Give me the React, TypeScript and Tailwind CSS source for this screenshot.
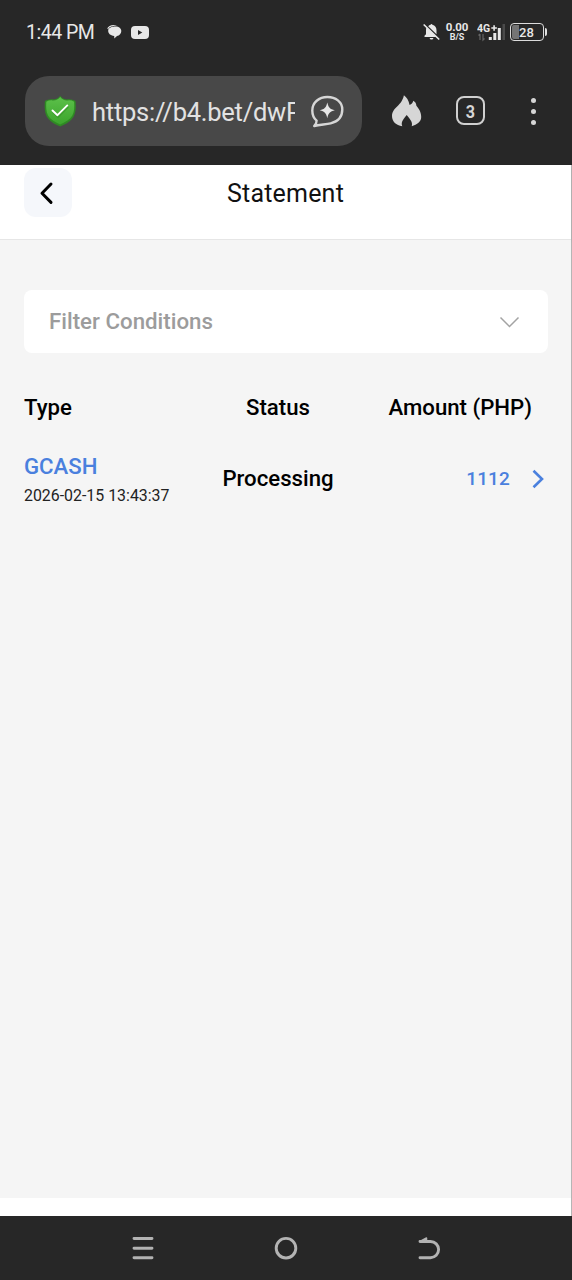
import type { ReactNode } from 'react';

type Transaction = {
  id: number;
  type: string;
  date: string;
  status: string;
  amount: number;
};

const transactions: Transaction[] = [
  { id: 1, type: 'GCASH', date: '2026-02-15 13:43:37', status: 'Processing', amount: 1112 },
];

function StatusBar() {
  return (
    <div className="flex h-16 items-center pl-[26px] pr-[25px] text-[#e8e8e8]">
      <span className="w-[69px] pt-px text-[19.5px] leading-none tracking-[-0.5px] whitespace-nowrap">1:44 PM</span>

      {/* notifications */}
      <svg className="ml-[11px] h-4 w-4" viewBox="0 0 16 16" fill="currentColor">
        <path d="M1.200 4.600C2 2.200 4.800.8 8 .9l3 .6C7.500 1.900 4 2.200 2.200 5z" />
        <path d="M8.500 2.600c3.900-.5 6.800 1.500 6.800 4.400 0 2.600-1.800 4.600-4.300 5.100L8.300 14.500l-.1-2.600C4.300 11.500 2 9.200 2.200 6.400c.2-2.200 2.800-3.600 6.300-3.800z" />
      </svg>
      <svg className="ml-[9px] h-[13px] w-[18px]" viewBox="0 0 18 13">
        <rect width="18" height="13" rx="4" fill="currentColor" />
        <path d="M7 4v5l4.300-2.500z" fill="#272727" />
      </svg>

      <div className="ml-auto flex items-center">
        <svg className="h-[18px] w-[17px]" viewBox="0 0 17 18" fill="currentColor">
          <path d="M3.500 4.200 13.500 14H1.500v-1.200L3 11.200V7.300c0-1.200.1-2.300.5-3.100z" />
          <path d="M5.200 3.300c.6-.7 1.400-1.200 2.400-1.500C7.700.8 9.300.8 9.400 1.800c2.700.6 4.100 2.700 4.100 5.500v4z" />
          <path d="M6.600 15h3.800c-.4 2-3.400 2-3.800 0z" />
          <path d="m1.200 2 14.500 14" stroke="currentColor" strokeWidth="1.700" strokeLinecap="round" />
        </svg>
        <div className="ml-[5px] flex w-[24px] flex-col items-center font-bold">
          <span className="h-[10px] text-[11.5px] leading-[9px] tracking-[-0.2px]">0.00</span>
          <span className="h-[9px] text-[9px] leading-[9px]">B/S</span>
        </div>
        <svg className="ml-[8px] h-[20px] w-[29px]" viewBox="0 0 29 20">
          <text x="0" y="10" fontSize="10.500" fontWeight="700" fill="currentColor" className="font-['Roboto',sans-serif]">4G</text>
          <path d="M14.300 6h5.600M17.100 3.200v5.600" stroke="currentColor" strokeWidth="1.600" />
          <path d="M3 12v6M1.500 13.500 3 12M6 12v6l1.500-1.500" stroke="#666" strokeWidth="1.200" fill="none" />
          <rect x="11.800" y="15" width="3" height="3" fill="currentColor" />
          <rect x="16.300" y="11" width="3" height="7" fill="currentColor" />
          <rect x="20.800" y="6" width="3" height="12" fill="currentColor" />
          <rect x="25.500" y="2" width="2.500" height="16" fill="#4a4a4a" />
        </svg>
        <div className="ml-[4px] flex items-center">
          <div className="flex h-[18px] w-[34px] items-center justify-center rounded-[4px] border-[1.5px] border-[#dcdcdc] bg-[linear-gradient(90deg,#747474_25%,transparent_25%)] bg-origin-content bg-clip-content p-px pr-[2px] text-[13px] leading-none font-medium">
            28
          </div>
          <div className="ml-px h-[8px] w-[2px] rounded-r bg-[#e0e0e0]" />
        </div>
      </div>
    </div>
  );
}

function ShieldIcon() {
  return (
    <svg className="h-8 w-8 shrink-0" viewBox="0 0 32 32">
      <defs>
        <linearGradient id="shield" x1="0" y1="0" x2="0" y2="1">
          <stop offset="0" stopColor="#5cc04a" />
          <stop offset="1" stopColor="#3ba52c" />
        </linearGradient>
      </defs>
      <path
        d="M16.200.800c2 2.700 4.500 3.900 7.800 3.500 2.400-.4 5.400.5 7.500 1.700.4 5.500.7 10.500-1.800 15.400-2.400 4.500-7.500 7.500-13.500 10.100-6-2.600-11-5.500-13.500-10C.200 16.500.5 11.500.9 6 3 4.800 6 3.900 8.400 4.300c3.300.4 5.800-.8 7.800-3.500z"
        fill="#2f8a24"
      />
      <path
        d="M16.200 2c2 2.700 4.700 3.800 8 3.400 2-.2 3.900.3 5.900 1.300.3 5 .3 9.700-1.800 13.900-2.200 3.900-6.600 6.500-12.100 8.900-5.500-2.400-9.900-5-12.100-8.900C2 16.400 2 11.700 2.300 6.700c2-1 3.900-1.500 5.900-1.300 3.300.4 6-.7 8-3.400z"
        fill="url(#shield)"
      />
      <path d="m9 16.500 5 5 10-10" fill="none" stroke="#2f8a24" strokeOpacity=".5" strokeWidth="2.500" />
      <path d="m8.500 15.500 5 4.700 9.800-9.800" fill="none" stroke="#fff" strokeWidth="1.900" strokeLinecap="round" strokeLinejoin="round" />
    </svg>
  );
}

function BrowserBar() {
  return (
    <div className="flex h-[101px] items-start pt-3 pl-[25px] text-[#d6d6d6]">
      <div className="flex h-[70px] w-[337px] items-center rounded-[24px] bg-[#484848] pl-[19px]">
        <ShieldIcon />
        <div className="ml-4 w-[203px] overflow-hidden pt-0.5 text-[25.5px] leading-8 tracking-[-0.25px] whitespace-nowrap text-[#e2e2e2]">
          https://b4.bet/dwP
        </div>
        <svg className="ml-[16px] h-[33px] w-[33px] shrink-0" viewBox="0 0 33 33">
          <path
            d="M3.200 31C4.800 29.200 5.800 28 5.600 25.600 3 23.400 1.300 20 1.300 15.400 1.300 7.500 8 2 16.400 2c8.200 0 14.900 4.800 14.900 12.500 0 8-5 12.200-11.600 13.800-5.200 1.200-11.300 1.200-16.500 2.700z"
            fill="none"
            stroke="currentColor"
            strokeWidth="2.400"
            strokeLinejoin="round"
          />
          <path d="M16.300 7.500c1.300 5.200 2.500 6.500 7.600 7.800-5.100 1.300-6.300 2.600-7.600 7.900-1.300-5.300-2.500-6.600-7.600-7.900 5.100-1.300 6.300-2.600 7.600-7.800z" fill="#e6e6e6" />
        </svg>
      </div>

      <svg className="mt-[18px] ml-[30px] h-[34px] w-[30px]" viewBox="0 0 30 34" fill="currentColor">
        <path d="M11.900 1.200c2.700 2 4.800 5 5.700 9.700 1.900-.7 3.100-2 3.700-4.200 2 1 3 2.700 3.100 5 2.700 3.300 4.800 6.300 4.800 11.300 0 4.500-4 7.700-9.500 9.300 1-3.300-.2-5.600-5-11.300-4.800 5.800-5.700 7.900-4.400 11.300C4.100 31.100 0 27.600 0 21.900c0-4.200 2.600-7.200 5.400-9.700 2.900-2.800 5.400-5.600 6.500-11z" />
      </svg>
      <div className="mt-5 ml-[34px] flex h-[29px] w-[29px] items-center justify-center rounded-[8px] border-2 border-[#d0d0d0] pt-px text-[19px] leading-none font-bold">
        <span className="scale-x-[0.85]">3</span>
      </div>
      <div className="mt-[22px] ml-[46px] flex flex-col gap-[6px]">
        <span className="h-[5px] w-[5px] rounded-full bg-[#d6d6d6]" />
        <span className="h-[5px] w-[5px] rounded-full bg-[#d6d6d6]" />
        <span className="h-[5px] w-[5px] rounded-full bg-[#d6d6d6]" />
      </div>
    </div>
  );
}

function PageHeader() {
  return (
    <header className="grid h-[75px] grid-cols-[48px_1fr_48px] items-start border-b border-[#e6e6e6] bg-white px-6 pt-[3px] shadow-[0_1px_3px_rgba(0,0,0,0.07)]">
      <button className="flex h-[49px] w-12 items-center justify-center rounded-xl bg-[#f5f7fb]">
        <svg className="-ml-[4px] h-6 w-4" viewBox="0 0 16 24" fill="none">
          <path d="M13 3 4 12.300 13 21.400" stroke="#000" strokeWidth="3" strokeLinecap="round" strokeLinejoin="round" />
        </svg>
      </button>
      <h1 className="pt-px text-center text-[25px] leading-[50px] tracking-[0.2px] text-[#111]">Statement</h1>
    </header>
  );
}

function TransactionRow({ item }: { item: Transaction }) {
  return (
    <div className="flex h-[60px] items-center">
      <div className="w-[180px] pt-1.5">
        <p className="text-[22.2px] leading-7 font-medium text-[#4a80de]">{item.type}</p>
        <p className="text-[15.9px] leading-[31px] text-[#222]">{item.date}</p>
      </div>
      <p className="w-[148px] pt-0.5 text-center text-[22.2px] font-medium text-black">{item.status}</p>
      <div className="flex flex-1 items-center justify-end pt-0.5 pr-[4px]">
        <span className="text-[19px] font-medium tracking-[0.15px] text-[#4a80de]">{item.amount}</span>
        <svg className="ml-[22px] h-5 w-3" viewBox="0 0 12 20" fill="none">
          <path d="m1.500 1.700 8.500 8.300-8.500 8.300" stroke="#4a80de" strokeWidth="2.600" />
        </svg>
      </div>
    </div>
  );
}

function NavButton({ children }: { children: ReactNode }) {
  return (
    <button className="flex w-[143px] justify-center">
      <svg className="h-6 w-6" viewBox="0 0 24 24" fill="none" stroke="#b3b3b3" strokeWidth="2.900" strokeLinecap="round">
        {children}
      </svg>
    </button>
  );
}

export default function App() {
  return (
    <div className="flex h-[1280px] w-[572px] flex-col overflow-hidden bg-[#272727] font-['Roboto',sans-serif]">
      <StatusBar />
      <BrowserBar />

      <div className="flex flex-1 flex-col border-r border-[#b5b5b5] bg-white">
        <PageHeader />
        <main className="flex-1 bg-[#f5f5f5] pt-[50px] pr-[23px] pl-6">
          <button className="flex h-[63px] w-full items-center justify-between rounded-lg bg-white pr-[28px] pl-[25px]">
            <span className="text-[22.3px] font-medium text-[#9c9c9c]">Filter Conditions</span>
            <svg className="h-3 w-[21px]" viewBox="0 0 21 12" fill="none">
              <path d="m1.500 1.500 9 9 9-9" stroke="#a3a3a3" strokeWidth="1.500" />
            </svg>
          </button>

          <div className="mt-[39px] flex h-8 items-center text-[22.2px] font-medium text-black">
            <span className="w-[180px]">Type</span>
            <span className="w-[148px] text-center">Status</span>
            <span className="flex-1 pr-4 text-right">Amount (PHP)</span>
          </div>

          <div className="mt-6">
            {transactions.map((item) => (
              <TransactionRow key={item.id} item={item} />
            ))}
          </div>
        </main>
        <div className="h-[18px] bg-white" />
      </div>

      <nav className="flex h-16 items-center justify-center">
        <NavButton>
          <path d="M3 2.500h18M3 12.200h18M3 21.700h18" />
        </NavButton>
        <NavButton>
          <circle cx="12" cy="12.200" r="9.800" />
        </NavButton>
        <NavButton>
          <path d="M3 5.500h10.500a8 8 0 0 1 0 16.200H3" />
          <path d="M3 5.500 9.500 2v3.500z" strokeWidth="1.500" fill="#b3b3b3" strokeLinejoin="round" />
        </NavButton>
      </nav>
    </div>
  );
}
